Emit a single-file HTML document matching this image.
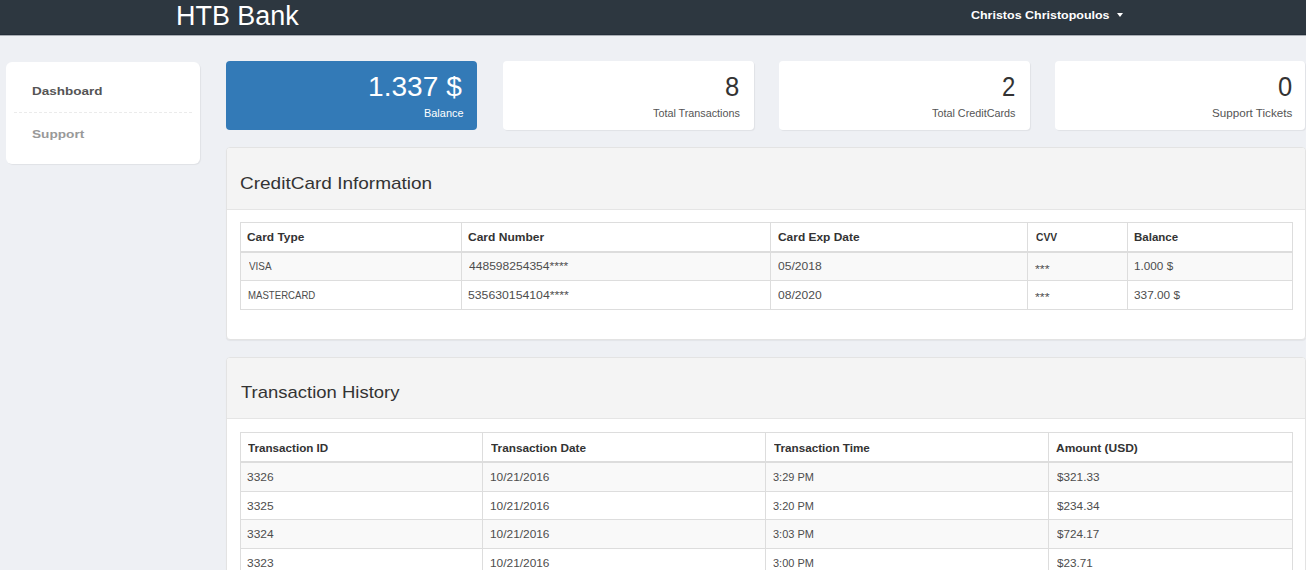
<!DOCTYPE html>
<html><head><meta charset="utf-8">
<style>
*{box-sizing:border-box;margin:0;padding:0}
html,body{width:1306px;height:570px;overflow:hidden}
body{background:#eef0f4;font-family:"Liberation Sans",sans-serif;position:relative}
div{position:absolute}
.t{position:absolute;white-space:nowrap;line-height:1;transform-origin:0 0;font-family:"Liberation Sans",sans-serif}
#nav{left:0;top:0;width:1306px;height:35px;background:#2d3740;border-bottom:1px solid #242e39}
#navsh{left:0;top:35px;width:1306px;height:1px;background:#a9aeb4}
#caret{left:1117px;top:13px;width:0;height:0;border-left:3px solid transparent;border-right:3px solid transparent;border-top:4px solid #fff}
#side{left:6px;top:62px;width:194px;height:102px;background:#fff;border-radius:6px;box-shadow:1px 1px 1px rgba(0,0,0,.06)}
#dashl{left:14px;top:112px;width:178px;height:0;border-top:1px dashed #ebebeb}
.card{top:61px;height:69px;width:251px;background:#fff;border-radius:4px;box-shadow:1px 1px 1px rgba(0,0,0,.06)}
.blue{background:#337ab7;box-shadow:none}
.panel{left:226px;width:1080px;background:#fff;border:1px solid #e3e3e3;border-radius:4px;overflow:hidden;box-shadow:0 1px 1px rgba(0,0,0,.05)}
.ph{left:0;top:0;right:0;background:#f4f4f4;border-bottom:1px solid #e5e5e5}
.hl{left:240px;width:1053px;height:1px;background:#ddd}
.vl{width:1px;background:#ddd}
.stripe{left:241px;width:1051px;background:#f9f9f9}
</style></head><body>
<div id="nav"></div><div id="navsh"></div>
<div id="caret"></div>
<div id="side"></div>
<div id="dashl"></div>
<div class="card blue" style="left:226px"></div>
<div class="card" style="left:503px"></div>
<div class="card" style="left:779px"></div>
<div class="card" style="left:1055px;width:250px"></div>

<div class="panel" style="top:147px;height:193px"><div class="ph" style="height:62px"></div></div>
<div class="stripe" style="top:253px;height:27px"></div>
<div class="hl" style="top:222px"></div>
<div class="hl" style="top:251px;height:2px"></div>
<div class="hl" style="top:280px"></div>
<div class="hl" style="top:309px"></div>
<div class="vl" style="left:240px;top:222px;height:88px"></div>
<div class="vl" style="left:461px;top:222px;height:88px"></div>
<div class="vl" style="left:770px;top:222px;height:88px"></div>
<div class="vl" style="left:1027px;top:222px;height:88px"></div>
<div class="vl" style="left:1127px;top:222px;height:88px"></div>
<div class="vl" style="left:1292px;top:222px;height:88px"></div>

<div class="panel" style="top:357px;height:240px"><div class="ph" style="height:61px"></div></div>
<div class="stripe" style="top:463px;height:28px"></div>
<div class="stripe" style="top:520px;height:28px"></div>
<div class="hl" style="top:432px"></div>
<div class="hl" style="top:461px;height:2px"></div>
<div class="hl" style="top:491px"></div>
<div class="hl" style="top:519px"></div>
<div class="hl" style="top:548px"></div>
<div class="vl" style="left:240px;top:432px;height:140px"></div>
<div class="vl" style="left:482px;top:432px;height:140px"></div>
<div class="vl" style="left:765px;top:432px;height:140px"></div>
<div class="vl" style="left:1048px;top:432px;height:140px"></div>
<div class="vl" style="left:1292px;top:432px;height:140px"></div>
<span class="t" style="left:176.34px;top:3.05px;font-size:27px;color:#fff;transform:scaleX(0.9968)">HTB Bank</span>
<span class="t" style="left:971.40px;top:9.76px;font-size:11px;color:#fff;transform:scaleX(1.1335);font-weight:bold">Christos Christopoulos</span>
<span class="t" style="left:31.64px;top:85.70px;font-size:11.5px;color:#555;transform:scaleX(1.1741);font-weight:bold">Dashboard</span>
<span class="t" style="left:31.64px;top:129.13px;font-size:11.5px;color:#999;transform:scaleX(1.1860);font-weight:bold">Support</span>
<span class="t" style="left:367.54px;top:73.68px;font-size:27px;color:#fff;transform:scaleX(1.0415)">1.337 $</span>
<span class="t" style="left:424.38px;top:108.04px;font-size:11px;color:#fff;transform:scaleX(0.9939)">Balance</span>
<span class="t" style="left:725.14px;top:73.90px;font-size:27px;color:#333;transform:scaleX(0.9508)">8</span>
<span class="t" style="left:652.72px;top:107.56px;font-size:11px;color:#555;transform:scaleX(0.9801)">Total Transactions</span>
<span class="t" style="left:1001.56px;top:73.90px;font-size:27px;color:#333;transform:scaleX(0.8877)">2</span>
<span class="t" style="left:931.58px;top:107.56px;font-size:11px;color:#555;transform:scaleX(0.9829)">Total CreditCards</span>
<span class="t" style="left:1277.95px;top:73.90px;font-size:27px;color:#333;transform:scaleX(0.9446)">0</span>
<span class="t" style="left:1211.78px;top:107.56px;font-size:11px;color:#555;transform:scaleX(1.0585)">Support Tickets</span>
<span class="t" style="left:240.26px;top:174.76px;font-size:17px;color:#333;transform:scaleX(1.1176)">CreditCard Information</span>
<span class="t" style="left:240.67px;top:384.06px;font-size:17px;color:#333;transform:scaleX(1.0871)">Transaction History</span>
<span class="t" style="left:247.38px;top:231.90px;font-size:11px;color:#333;transform:scaleX(1.0815);font-weight:bold">Card Type</span>
<span class="t" style="left:468.20px;top:231.90px;font-size:11px;color:#333;transform:scaleX(1.0929);font-weight:bold">Card Number</span>
<span class="t" style="left:778.06px;top:231.90px;font-size:11px;color:#333;transform:scaleX(1.0844);font-weight:bold">Card Exp Date</span>
<span class="t" style="left:1035.66px;top:231.90px;font-size:11px;color:#333;transform:scaleX(0.9356);font-weight:bold">CVV</span>
<span class="t" style="left:1134.23px;top:231.90px;font-size:11px;color:#333;transform:scaleX(1.0470);font-weight:bold">Balance</span>
<span class="t" style="left:248.64px;top:261.46px;font-size:11px;color:#4d4d4d;transform:scaleX(0.9003)">VISA</span>
<span class="t" style="left:468.63px;top:260.90px;font-size:11px;color:#4d4d4d;transform:scaleX(1.0968)">448598254354****</span>
<span class="t" style="left:777.74px;top:261.02px;font-size:11px;color:#4d4d4d;transform:scaleX(1.0965)">05/2018</span>
<span class="t" style="left:1035.06px;top:264.10px;font-size:11px;color:#4d4d4d;transform:scaleX(1.1264)">***</span>
<span class="t" style="left:1134.23px;top:261.02px;font-size:11px;color:#4d4d4d;transform:scaleX(1.0668)">1.000 $</span>
<span class="t" style="left:247.85px;top:289.90px;font-size:11px;color:#4d4d4d;transform:scaleX(0.8742)">MASTERCARD</span>
<span class="t" style="left:468.22px;top:289.90px;font-size:11px;color:#4d4d4d;transform:scaleX(1.1129)">535630154104****</span>
<span class="t" style="left:777.74px;top:289.90px;font-size:11px;color:#4d4d4d;transform:scaleX(1.0965)">08/2020</span>
<span class="t" style="left:1035.06px;top:291.99px;font-size:11px;color:#4d4d4d;transform:scaleX(1.1264)">***</span>
<span class="t" style="left:1134.34px;top:289.90px;font-size:11px;color:#4d4d4d;transform:scaleX(1.0744)">337.00 $</span>
<span class="t" style="left:248.04px;top:442.80px;font-size:11px;color:#333;transform:scaleX(1.0589);font-weight:bold">Transaction ID</span>
<span class="t" style="left:491.18px;top:442.80px;font-size:11px;color:#333;transform:scaleX(1.0710);font-weight:bold">Transaction Date</span>
<span class="t" style="left:773.62px;top:442.80px;font-size:11px;color:#333;transform:scaleX(1.0614);font-weight:bold">Transaction Time</span>
<span class="t" style="left:1055.54px;top:442.80px;font-size:11px;color:#333;transform:scaleX(1.0886);font-weight:bold">Amount (USD)</span>
<span class="t" style="left:247.38px;top:472.24px;font-size:11px;color:#4d4d4d;transform:scaleX(1.0873)">3326</span>
<span class="t" style="left:490.08px;top:472.24px;font-size:11px;color:#4d4d4d;transform:scaleX(1.0803)">10/21/2016</span>
<span class="t" style="left:772.82px;top:472.24px;font-size:11px;color:#4d4d4d;transform:scaleX(0.9981)">3:29 PM</span>
<span class="t" style="left:1056.94px;top:472.24px;font-size:11px;color:#4d4d4d;transform:scaleX(1.0680)">$321.33</span>
<span class="t" style="left:247.38px;top:500.68px;font-size:11px;color:#4d4d4d;transform:scaleX(1.0873)">3325</span>
<span class="t" style="left:490.08px;top:500.68px;font-size:11px;color:#4d4d4d;transform:scaleX(1.0803)">10/21/2016</span>
<span class="t" style="left:772.82px;top:500.68px;font-size:11px;color:#4d4d4d;transform:scaleX(0.9981)">3:20 PM</span>
<span class="t" style="left:1056.94px;top:500.68px;font-size:11px;color:#4d4d4d;transform:scaleX(1.0680)">$234.34</span>
<span class="t" style="left:247.38px;top:528.88px;font-size:11px;color:#4d4d4d;transform:scaleX(1.0873)">3324</span>
<span class="t" style="left:490.08px;top:528.88px;font-size:11px;color:#4d4d4d;transform:scaleX(1.0803)">10/21/2016</span>
<span class="t" style="left:772.82px;top:528.88px;font-size:11px;color:#4d4d4d;transform:scaleX(0.9981)">3:03 PM</span>
<span class="t" style="left:1056.94px;top:528.88px;font-size:11px;color:#4d4d4d;transform:scaleX(1.0638)">$724.17</span>
<span class="t" style="left:247.38px;top:557.90px;font-size:11px;color:#4d4d4d;transform:scaleX(1.0873)">3323</span>
<span class="t" style="left:490.08px;top:557.90px;font-size:11px;color:#4d4d4d;transform:scaleX(1.0803)">10/21/2016</span>
<span class="t" style="left:772.82px;top:557.90px;font-size:11px;color:#4d4d4d;transform:scaleX(0.9981)">3:00 PM</span>
<span class="t" style="left:1056.94px;top:557.90px;font-size:11px;color:#4d4d4d;transform:scaleX(1.0665)">$23.71</span>
</body></html>
